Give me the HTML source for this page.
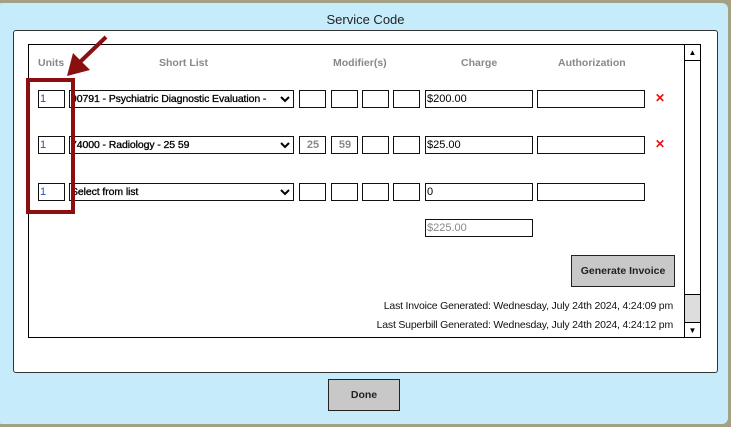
<!DOCTYPE html>
<html><head><style>
*{box-sizing:border-box;margin:0;padding:0}
body{width:731px;height:427px;background:#a3a184;position:relative;overflow:hidden;font-family:"Liberation Sans",sans-serif;font-size:11px;color:#000}
.dlg{position:absolute;left:-4px;top:3px;width:732px;height:421px;background:#c6ecfb;border-radius:6px}
.title{position:absolute;left:0;top:12px;width:731px;text-align:center;font-size:13px;color:#222}
.panel{position:absolute;left:13px;top:30px;width:705px;height:343px;background:#fff;border:1px solid #333;border-radius:3px}
.box{position:absolute;left:28px;top:44px;width:673px;height:294px;border:1px solid #000;background:#fff}
.hd{position:absolute;top:57px;font-size:10.5px;color:#888;font-weight:bold}
.in{position:absolute;height:18px;border:1px solid #111;background:#fff;font-size:11px;line-height:16px;padding-left:1px;white-space:nowrap;overflow:hidden}
.blue{color:#1a55c0}
.gray{color:#888;text-align:center;font-weight:bold}
.sel{font-size:10.5px;letter-spacing:-0.1px;-webkit-text-stroke:0.3px #000}
.chev{position:absolute;right:3px;top:5px;background:#fff;padding-left:2px}
.x{position:absolute;color:#e11;font-weight:bold;font-size:12px}
.btn{position:absolute;background:#c8c8c8;border:1px solid #222;text-align:center;font-weight:bold;font-size:10.5px;color:#222}
.sb{position:absolute;left:684px;top:45px;width:16px;height:292px;border-left:1px solid #000}
.ln{position:absolute;right:58px;font-size:10.5px;color:#111;letter-spacing:-0.2px}
</style></head><body>
<div class="dlg"></div>
<div class="title">Service Code</div>
<div class="panel"></div>
<div class="box"></div>
<div class="sb">
 <div style="position:absolute;left:0;top:0;width:15px;height:16px;border-bottom:1px solid #000;text-align:center;font-size:8px;line-height:16px">▲</div>
 <div style="position:absolute;left:0;top:249px;width:15px;height:28px;background:#ddd;border-top:1px solid #000"></div>
 <div style="position:absolute;left:0;top:277px;width:15px;height:15px;border-top:1px solid #000;text-align:center;font-size:8px;line-height:15px">▼</div>
</div>
<div class="hd" style="left:38px">Units</div>
<div class="hd" style="left:159px">Short List</div>
<div class="hd" style="left:333px">Modifier(s)</div>
<div class="hd" style="left:461px">Charge</div>
<div class="hd" style="left:558px">Authorization</div>

<div class="in blue" style="left:38px;top:90px;width:27px">1</div>
<div class="in sel" style="left:69px;top:90px;width:225px">90791 - Psychiatric Diagnostic Evaluation -<svg class="chev" width="13" height="8"><polyline points="2,1 6,5 10,1" fill="none" stroke="#000" stroke-width="2"/></svg></div>
<div class="in" style="left:299px;top:90px;width:27px"></div>
<div class="in" style="left:331px;top:90px;width:27px"></div>
<div class="in" style="left:362px;top:90px;width:27px"></div>
<div class="in" style="left:393px;top:90px;width:27px"></div>
<div class="in" style="left:425px;top:90px;width:108px">$200.00</div>
<div class="in" style="left:537px;top:90px;width:108px"></div>
<div class="x" style="left:655px;top:91px">✕</div>

<div class="in blue" style="left:38px;top:136px;width:27px">1</div>
<div class="in sel" style="left:69px;top:136px;width:225px">74000 - Radiology - 25 59<svg class="chev" width="13" height="8"><polyline points="2,1 6,5 10,1" fill="none" stroke="#000" stroke-width="2"/></svg></div>
<div class="in gray" style="left:299px;top:136px;width:27px">25</div>
<div class="in gray" style="left:331px;top:136px;width:27px">59</div>
<div class="in" style="left:362px;top:136px;width:27px"></div>
<div class="in" style="left:393px;top:136px;width:27px"></div>
<div class="in" style="left:425px;top:136px;width:108px">$25.00</div>
<div class="in" style="left:537px;top:136px;width:108px"></div>
<div class="x" style="left:655px;top:137px">✕</div>

<div class="in blue" style="left:38px;top:183px;width:27px">1</div>
<div class="in sel" style="left:69px;top:183px;width:225px">Select from list<svg class="chev" width="13" height="8"><polyline points="2,1 6,5 10,1" fill="none" stroke="#000" stroke-width="2"/></svg></div>
<div class="in" style="left:299px;top:183px;width:27px"></div>
<div class="in" style="left:331px;top:183px;width:27px"></div>
<div class="in" style="left:362px;top:183px;width:27px"></div>
<div class="in" style="left:393px;top:183px;width:27px"></div>
<div class="in" style="left:425px;top:183px;width:108px">0</div>
<div class="in" style="left:537px;top:183px;width:108px"></div>

<div class="in" style="left:425px;top:219px;width:108px;color:#888">$225.00</div>

<div class="btn" style="left:571px;top:255px;width:104px;height:32px;line-height:30px">Generate Invoice</div>
<div class="ln" style="top:300px">Last Invoice Generated: Wednesday, July 24th 2024, 4:24:09 pm</div>
<div class="ln" style="top:319px">Last Superbill Generated: Wednesday, July 24th 2024, 4:24:12 pm</div>

<div class="btn" style="left:328px;top:379px;width:72px;height:32px;line-height:30px">Done</div>

<div style="position:absolute;left:26px;top:78px;width:49px;height:136px;border:4px solid #8b0f0f"></div>
<svg style="position:absolute;left:0;top:0" width="731" height="427">
 <line x1="106" y1="37" x2="80" y2="62" stroke="#8b0f0f" stroke-width="4"/>
 <polygon points="67,76 73,53 90,70" fill="#8b0f0f"/>
</svg>
</body></html>
